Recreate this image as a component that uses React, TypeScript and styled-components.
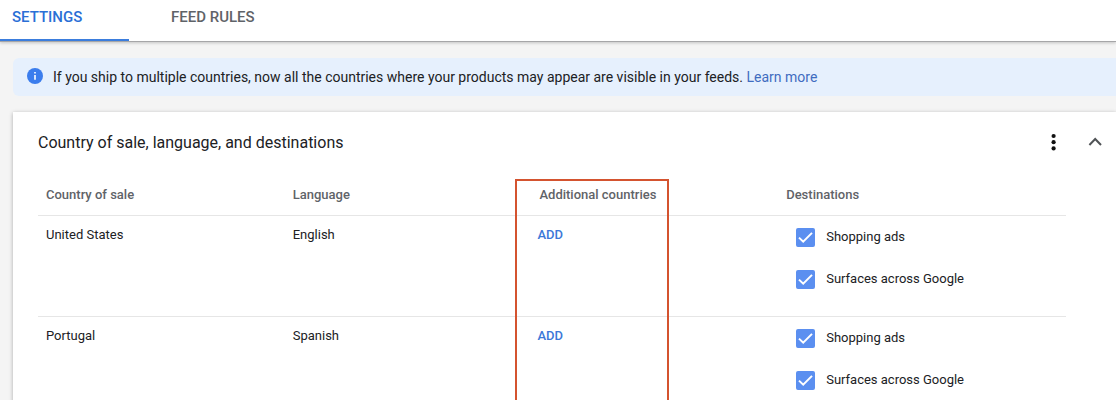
import React, { useState } from "react";
import styled, { createGlobalStyle } from "styled-components";

const GlobalStyle = createGlobalStyle`
  *, *::before, *::after { box-sizing: border-box; }
  html { scrollbar-width: none; }
  body {
    margin: 0;
    background: #f4f4f4;
    color: #202124;
    font-family: Roboto, "Liberation Sans", sans-serif;
    font-size: 13px;
    line-height: 20px;
  }
`;

const Page = styled.div`
  min-height: 100vh;
  overflow: hidden;
`;

const TabBar = styled.nav`
  display: flex;
  gap: 30px;
  height: 42px;
  background: #fff;
  border-bottom: 1px solid #a6a6a8;
  box-shadow: 0 1px 3px rgba(0, 0, 0, 0.2);
`;

const Tab = styled.button<{ $active?: boolean }>`
  min-width: 129px;
  padding: 0 12px 5px;
  border: 0;
  border-bottom: 2px solid ${(p) => (p.$active ? "#3b7ddd" : "transparent")};
  background: none;
  color: ${(p) => (p.$active ? "#2a6fd6" : "#5f6368")};
  font: 500 15px/20px Roboto, "Liberation Sans", sans-serif;
  text-align: left;
  cursor: pointer;
`;

const Main = styled.main`
  display: flex;
  flex-direction: column;
  gap: 16px;
  padding: 16px 0 0 13px;
`;

const Banner = styled.section`
  display: flex;
  align-items: center;
  gap: 9px;
  min-height: 38px;
  padding: 0 13px;
  border-radius: 6px 0 0 6px;
  background: #e6f0fd;
  font-size: 14px;
`;

const BannerText = styled.p`
  margin: 0;
`;

const Link = styled.a`
  color: #3f6cc0;
  text-decoration: none;
`;

const Card = styled.section`
  padding: 16px 0 24px 25px;
  background: #fff;
  box-shadow: 0 1px 4px rgba(0, 0, 0, 0.3);
`;

const CardHeader = styled.header`
  display: flex;
  align-items: center;
  justify-content: space-between;
  height: 30px;
  padding-right: 9px;
`;

const CardTitle = styled.h2`
  margin: 0;
  font-size: 16px;
  font-weight: 400;
  line-height: 24px;
`;

const HeaderActions = styled.div`
  display: flex;
  gap: 18px;
`;

const IconButton = styled.button`
  display: grid;
  place-items: center;
  width: 24px;
  height: 24px;
  padding: 0;
  border: 0;
  background: none;
  cursor: pointer;
`;

const TableArea = styled.div`
  position: relative;
  margin: 16px 50px 0 0;
`;

const Table = styled.table`
  width: 100%;
  table-layout: fixed;
  border-collapse: separate;
  border-spacing: 0;
`;

const Column = styled.col<{ $width: string }>`
  width: ${(p) => p.$width};
`;

const HeadCell = styled.th`
  height: 42px;
  padding: 0 8px;
  border-bottom: 1px solid #e6e6e6;
  color: #5f6368;
  font-weight: 500;
  text-align: left;
`;

const Cell = styled.td`
  padding: 9px 8px 0;
  border-bottom: 1px solid #e6e6e6;
  vertical-align: top;
`;

const ActionCell = styled(Cell)`
  padding-left: 6px;
`;

const DestinationCell = styled(Cell)`
  padding: 0 8px 16px 18px;
`;

const AddButton = styled.button`
  display: block;
  padding: 0;
  border: 0;
  background: none;
  color: #3c78d8;
  font: 500 13px/20px Roboto, "Liberation Sans", sans-serif;
  cursor: pointer;
`;

const Option = styled.label`
  display: flex;
  align-items: center;
  gap: 11px;
  height: 42px;
`;

const CheckWrap = styled.span`
  display: grid;
  width: 19px;
  height: 19px;
`;

const CheckInput = styled.input`
  grid-area: 1 / 1;
  appearance: none;
  width: 19px;
  height: 19px;
  margin: 0;
  border: 2px solid #5b8ff0;
  border-radius: 2px;

  &:checked { background: #5b8ff0; }
  &:not(:checked) + svg { visibility: hidden; }
`;

const CheckMark = styled.svg`
  grid-area: 1 / 1;
  width: 19px;
  height: 19px;
  pointer-events: none;
`;

const Highlight = styled.div`
  position: absolute;
  top: 5px;
  bottom: -8px;
  left: calc(48% - 16px);
  width: 154px;
  border: 2px solid #d4532f;
  pointer-events: none;
`;

const rows = [
  { country: "United States", language: "English" },
  { country: "Portugal", language: "Spanish" },
];

const destinations = ["Shopping ads", "Surfaces across Google"];

function DestinationOption({ name }: { name: string }) {
  const [checked, setChecked] = useState(true);
  return (
    <Option>
      <CheckWrap>
        <CheckInput type="checkbox" checked={checked} onChange={() => setChecked(!checked)} />
        <CheckMark viewBox="0 0 19 19" aria-hidden="true">
          <path d="M3 9.6 7.2 13.7 16 4.9" fill="none" stroke="#fff" strokeWidth="2" />
        </CheckMark>
      </CheckWrap>
      {name}
    </Option>
  );
}

export default function App() {
  return (
    <Page>
      <GlobalStyle />
      <TabBar>
        <Tab type="button" $active>SETTINGS</Tab>
        <Tab type="button">FEED RULES</Tab>
      </TabBar>
      <Main>
        <Banner>
          <svg width="18" height="18" viewBox="0 0 18 18" aria-hidden="true">
            <circle cx="9" cy="8" r="8" fill="#3b7ded" />
            <path d="M9 7.1v4.6M9 3.9v1.7" stroke="#fff" strokeWidth="1.6" />
          </svg>
          <BannerText>
            If you ship to multiple countries, now all the countries where your products may appear are visible in your feeds.{" "}
            <Link href="#learn-more">Learn more</Link>
          </BannerText>
        </Banner>
        <Card>
          <CardHeader>
            <CardTitle>Country of sale, language, and destinations</CardTitle>
            <HeaderActions>
              <IconButton type="button" aria-label="More options">
                <svg width="24" height="24" viewBox="0 0 24 24" fill="#111">
                  <circle cx="12.6" cy="5" r="2.1" />
                  <circle cx="12.6" cy="11.2" r="2.1" />
                  <circle cx="12.6" cy="17.4" r="2.1" />
                </svg>
              </IconButton>
              <IconButton type="button" aria-label="Collapse">
                <svg width="24" height="24" viewBox="0 0 24 24">
                  <path d="M6.4 14 12.2 8l5.8 6" fill="none" stroke="#505356" strokeWidth="2" />
                </svg>
              </IconButton>
            </HeaderActions>
          </CardHeader>
          <TableArea>
            <Table>
              <colgroup>
                <Column $width="24%" />
                <Column $width="24%" />
                <Column $width="24%" />
                <Column $width="28%" />
              </colgroup>
              <thead>
                <tr>
                  <HeadCell scope="col">Country of sale</HeadCell>
                  <HeadCell scope="col">Language</HeadCell>
                  <HeadCell scope="col">Additional countries</HeadCell>
                  <HeadCell scope="col">Destinations</HeadCell>
                </tr>
              </thead>
              <tbody>
                {rows.map((row) => (
                  <tr key={row.country}>
                    <Cell>{row.country}</Cell>
                    <Cell>{row.language}</Cell>
                    <ActionCell>
                      <AddButton type="button">ADD</AddButton>
                    </ActionCell>
                    <DestinationCell>
                      {destinations.map((name) => (
                        <DestinationOption key={name} name={name} />
                      ))}
                    </DestinationCell>
                  </tr>
                ))}
              </tbody>
            </Table>
            <Highlight />
          </TableArea>
        </Card>
      </Main>
    </Page>
  );
}
